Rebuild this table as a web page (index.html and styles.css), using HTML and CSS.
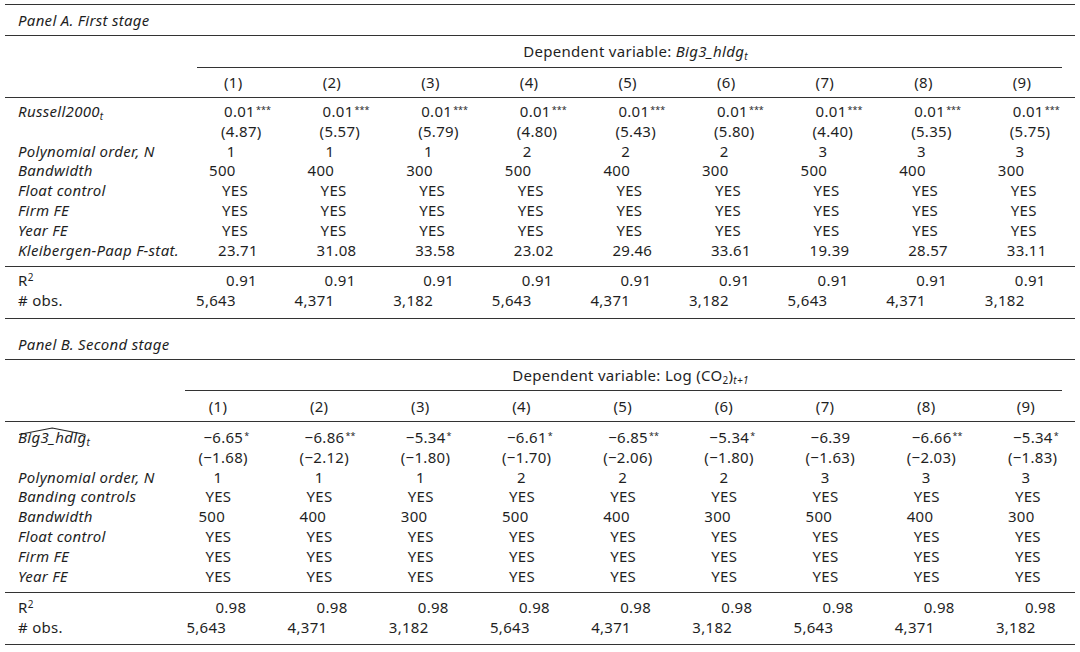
FILE: index.html
```html
<!DOCTYPE html>
<html>
<head>
<meta charset="utf-8">
<link rel="stylesheet" href="styles.css">
</head>
<body>
<div class="table">
  <div class="ptitle ptitle-a">Panel A. First stage</div>
  <div class="dep dep-a"><span>Dependent variable: <i>Big3_hldg<sub>t</sub></i></span></div>
  <div class="row ga hdr">
    <div></div><div>(1)</div><div>(2)</div><div>(3)</div><div>(4)</div><div>(5)</div><div>(6)</div><div>(7)</div><div>(8)</div><div>(9)</div>
  </div>
  <div class="block body-a">
    <div class="row ga coef">
      <div class="lbl">Russell2000<sub>t</sub></div>
      <div>0.01<sup class="st">***</sup></div><div>0.01<sup class="st">***</sup></div><div>0.01<sup class="st">***</sup></div><div>0.01<sup class="st">***</sup></div><div>0.01<sup class="st">***</sup></div><div>0.01<sup class="st">***</sup></div><div>0.01<sup class="st">***</sup></div><div>0.01<sup class="st">***</sup></div><div>0.01<sup class="st">***</sup></div>
    </div>
    <div class="row ga tst">
      <div class="lbl"></div>
      <div>(4.87)</div><div>(5.57)</div><div>(5.79)</div><div>(4.80)</div><div>(5.43)</div><div>(5.80)</div><div>(4.40)</div><div>(5.35)</div><div>(5.75)</div>
    </div>
    <div class="row ga ord">
      <div class="lbl">Polynomial order, N</div>
      <div>1</div><div>1</div><div>1</div><div>2</div><div>2</div><div>2</div><div>3</div><div>3</div><div>3</div>
    </div>
    <div class="row ga bw">
      <div class="lbl">Bandwidth</div>
      <div>500</div><div>400</div><div>300</div><div>500</div><div>400</div><div>300</div><div>500</div><div>400</div><div>300</div>
    </div>
    <div class="row ga yes">
      <div class="lbl">Float control</div>
      <div>YES</div><div>YES</div><div>YES</div><div>YES</div><div>YES</div><div>YES</div><div>YES</div><div>YES</div><div>YES</div>
    </div>
    <div class="row ga yes">
      <div class="lbl">Firm FE</div>
      <div>YES</div><div>YES</div><div>YES</div><div>YES</div><div>YES</div><div>YES</div><div>YES</div><div>YES</div><div>YES</div>
    </div>
    <div class="row ga yes">
      <div class="lbl">Year FE</div>
      <div>YES</div><div>YES</div><div>YES</div><div>YES</div><div>YES</div><div>YES</div><div>YES</div><div>YES</div><div>YES</div>
    </div>
    <div class="row ga kp">
      <div class="lbl">Kleibergen-Paap F-stat.</div>
      <div>23.71</div><div>31.08</div><div>33.58</div><div>23.02</div><div>29.46</div><div>33.61</div><div>19.39</div><div>28.57</div><div>33.11</div>
    </div>
  </div>
  <div class="block stats-a">
    <div class="row ga r2">
      <div class="lbl up">R<sup class="sq">2</sup></div>
      <div>0.91</div><div>0.91</div><div>0.91</div><div>0.91</div><div>0.91</div><div>0.91</div><div>0.91</div><div>0.91</div><div>0.91</div>
    </div>
    <div class="row ga obs">
      <div class="lbl up"># obs.</div>
      <div>5,643</div><div>4,371</div><div>3,182</div><div>5,643</div><div>4,371</div><div>3,182</div><div>5,643</div><div>4,371</div><div>3,182</div>
    </div>
  </div>

  <div class="ptitle ptitle-b">Panel B. Second stage</div>
  <div class="dep dep-b"><span>Dependent variable: Log (CO<sub>2</sub>)<sub><i>t+1</i></sub></span></div>
  <div class="row gb hdr">
    <div></div><div>(1)</div><div>(2)</div><div>(3)</div><div>(4)</div><div>(5)</div><div>(6)</div><div>(7)</div><div>(8)</div><div>(9)</div>
  </div>
  <div class="block body-b">
    <div class="row gb coef">
      <div class="lbl"><span class="hat">Big3_hdlg<svg class="hat-mark" width="64" height="8" viewBox="0 0 64 8" preserveAspectRatio="none"><path d="M1 7.5 L32 1 L63 7.5" fill="none" stroke="#222" stroke-width="1"/></svg></span><sub>t</sub></div>
      <div>−6.65<sup class="st">*</sup></div><div>−6.86<sup class="st">**</sup></div><div>−5.34<sup class="st">*</sup></div><div>−6.61<sup class="st">*</sup></div><div>−6.85<sup class="st">**</sup></div><div>−5.34<sup class="st">*</sup></div><div>−6.39</div><div>−6.66<sup class="st">**</sup></div><div>−5.34<sup class="st">*</sup></div>
    </div>
    <div class="row gb tst">
      <div class="lbl"></div>
      <div>(−1.68)</div><div>(−2.12)</div><div>(−1.80)</div><div>(−1.70)</div><div>(−2.06)</div><div>(−1.80)</div><div>(−1.63)</div><div>(−2.03)</div><div>(−1.83)</div>
    </div>
    <div class="row gb ord">
      <div class="lbl">Polynomial order, N</div>
      <div>1</div><div>1</div><div>1</div><div>2</div><div>2</div><div>2</div><div>3</div><div>3</div><div>3</div>
    </div>
    <div class="row gb yes">
      <div class="lbl">Banding controls</div>
      <div>YES</div><div>YES</div><div>YES</div><div>YES</div><div>YES</div><div>YES</div><div>YES</div><div>YES</div><div>YES</div>
    </div>
    <div class="row gb bw">
      <div class="lbl">Bandwidth</div>
      <div>500</div><div>400</div><div>300</div><div>500</div><div>400</div><div>300</div><div>500</div><div>400</div><div>300</div>
    </div>
    <div class="row gb yes">
      <div class="lbl">Float control</div>
      <div>YES</div><div>YES</div><div>YES</div><div>YES</div><div>YES</div><div>YES</div><div>YES</div><div>YES</div><div>YES</div>
    </div>
    <div class="row gb yes">
      <div class="lbl">Firm FE</div>
      <div>YES</div><div>YES</div><div>YES</div><div>YES</div><div>YES</div><div>YES</div><div>YES</div><div>YES</div><div>YES</div>
    </div>
    <div class="row gb yes">
      <div class="lbl">Year FE</div>
      <div>YES</div><div>YES</div><div>YES</div><div>YES</div><div>YES</div><div>YES</div><div>YES</div><div>YES</div><div>YES</div>
    </div>
  </div>
  <div class="block stats-b">
    <div class="row gb r2">
      <div class="lbl up">R<sup class="sq">2</sup></div>
      <div>0.98</div><div>0.98</div><div>0.98</div><div>0.98</div><div>0.98</div><div>0.98</div><div>0.98</div><div>0.98</div><div>0.98</div>
    </div>
    <div class="row gb obs">
      <div class="lbl up"># obs.</div>
      <div>5,643</div><div>4,371</div><div>3,182</div><div>5,643</div><div>4,371</div><div>3,182</div><div>5,643</div><div>4,371</div><div>3,182</div>
    </div>
  </div>
</div>
</body>
</html>
```

FILE: styles.css
```css
html, body {
  margin: 0;
  padding: 0;
  background: #ffffff;
}

body {
  font-family: "Noto Sans", "Open Sans", sans-serif;
  font-size: 15px;
  letter-spacing: 0.3px;
  color: #1f1f1f;
}

.table {
  width: 1070px;
  margin: 4px 5px 0 5px;
  border-top: 1px solid #333;
}

.ptitle {
  font-style: italic;
  padding-left: 13px;
  line-height: 30px;
  border-bottom: 1px solid #333;
}

.ptitle-b {
  padding-top: 10px;
}

.dep {
  line-height: 31px;
  border-bottom: 1px solid #333;
  text-align: center;
  white-space: nowrap;
}

.dep-a {
  margin-left: 192px;
  margin-right: 13px;
}

.dep-a span {
  padding-left: 12px;
}

.dep-b {
  margin-left: 180px;
  margin-right: 13px;
  line-height: 30px;
}

.dep-b span {
  padding-left: 14px;
}

sub {
  font-size: 10px;
  vertical-align: -3px;
  line-height: 0;
}

sup {
  line-height: 0;
}

.st {
  font-size: 9px;
  vertical-align: 4px;
  margin-left: 1px;
  letter-spacing: 0;
}

.sq {
  font-size: 10px;
  vertical-align: 5px;
}

.row {
  display: grid;
  white-space: nowrap;
  line-height: 19.8px;
}

.ga {
  grid-template-columns: 179px repeat(9, 98.6px);
}

.gb {
  grid-template-columns: 162.4px repeat(8, 101.2px) 98px;
}

.hdr {
  border-bottom: 1px solid #333;
  line-height: 29px;
  text-align: center;
}

.gb.hdr {
  line-height: 30px;
}

.block {
  border-bottom: 1px solid #333;
}

.body-a {
  padding: 4px 0 6px 0;
}

.stats-a {
  padding: 4px 0 7px 0;
}

.body-b {
  padding: 6px 0 6px 0;
}

.stats-b {
  padding: 5px 0 6px 0;
}

.lbl {
  font-style: italic;
  padding-left: 13px;
}

.lbl.up {
  font-style: normal;
}

/* panel A value offsets */
.ga.coef > div + div { padding-left: 40px; }
.ga.tst > div + div { padding-left: 37px; }
.ga.ord > div + div { text-align: center; padding-right: 4px; }
.ga.bw > div + div { padding-left: 25px; }
.ga.yes > div + div { padding-left: 38px; }
.ga.kp > div + div { padding-left: 34px; }
.ga.r2 > div + div { padding-left: 42px; }
.ga.obs > div + div { padding-left: 12px; }

/* panel B value offsets */
.gb.coef > div + div { padding-left: 36px; }
.gb.tst > div + div { padding-left: 31px; }
.gb.ord > div + div { text-align: center; }
.gb.bw > div + div { padding-left: 31px; }
.gb.yes > div + div { padding-left: 38px; }
.gb.r2 > div + div { padding-left: 48px; }
.gb.obs > div + div { padding-left: 19px; }

.hat {
  position: relative;
  display: inline-block;
}

.hat-mark {
  position: absolute;
  left: 0;
  top: -1px;
  width: 100%;
  height: 8px;
}
```
